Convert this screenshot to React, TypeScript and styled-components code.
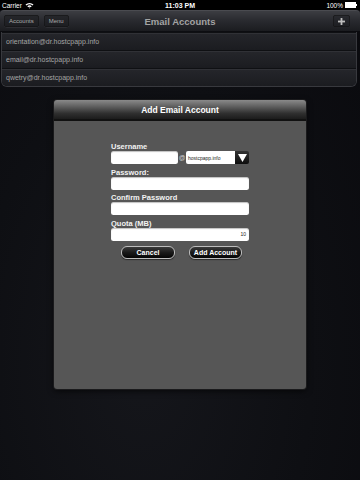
import * as React from "react";
import styled, { createGlobalStyle } from "styled-components";

const GlobalStyle = createGlobalStyle`
  html, body {
    margin: 0;
    padding: 0;
    background: #0c0d11;
  }
  body {
    font-family: "Liberation Sans", Arial, sans-serif;
  }
`;

const accounts = [
  "orientation@dr.hostcpapp.info",
  "email@dr.hostcpapp.info",
  "qwetry@dr.hostcpapp.info",
];

function App() {
  return (
    <Screen>
      <GlobalStyle />
      <StatusBar>
        <div className="left">
          <span>Carrier</span>
          <svg width="9" height="7" viewBox="0 0 9 7">
            <path d="M0.5 2.5 A6 6 0 0 1 8.5 2.5 L7.5 3.5 A4.5 4.5 0 0 0 1.5 3.5 Z" fill="#fff" />
            <path d="M2.3 4.2 A3.6 3.6 0 0 1 6.7 4.2 L5.7 5.2 A2.2 2.2 0 0 0 3.3 5.2 Z" fill="#fff" />
            <path d="M3.9 5.9 L4.5 5.3 L5.1 5.9 L4.5 6.6 Z" fill="#fff" />
          </svg>
        </div>
        <div className="time">11:03 PM</div>
        <div className="right">
          <span>100%</span>
          <Battery>
            <div className="cell" />
            <div className="tip" />
          </Battery>
        </div>
      </StatusBar>

      <NavBar>
        <NavButton>Accounts</NavButton>
        <NavButton>Menu</NavButton>
        <NavTitle>Email Accounts</NavTitle>
        <PlusButton>
          <svg width="7" height="7" viewBox="0 0 7 7">
            <rect x="2.6" y="0" width="1.8" height="7" fill="#bdbdbd" />
            <rect x="0" y="2.6" width="7" height="1.8" fill="#bdbdbd" />
          </svg>
        </PlusButton>
      </NavBar>

      <AccountList>
        {accounts.map((a) => (
          <AccountRow key={a}>{a}</AccountRow>
        ))}
      </AccountList>

      <Modal>
        <ModalHeader>Add Email Account</ModalHeader>
        <ModalBody>
          <Form>
            <Label>Username</Label>
            <UserRow>
              <Input width={67} />
              <At>@</At>
              <Select>
                <span>hostcpapp.info</span>
              </Select>
              <SelectButton>
                <svg width="9" height="8" viewBox="0 0 9 8">
                  <path d="M0 0 H9 L4.5 8 Z" fill="#fff" />
                </svg>
              </SelectButton>
            </UserRow>
            <Label>Password:</Label>
            <Input />
            <Label>Confirm Password</Label>
            <Input />
            <Label>Quota (MB)</Label>
            <Input>
              <span>10</span>
            </Input>
            <Buttons>
              <PillButton width={54}>Cancel</PillButton>
              <PillButton width={53}>Add Account</PillButton>
            </Buttons>
          </Form>
        </ModalBody>
      </Modal>
    </Screen>
  );
}

export default App;

const Screen = styled.div`
  width: 360px;
  height: 480px;
  overflow: hidden;
  display: flex;
  flex-direction: column;
  background: radial-gradient(
      ellipse at 40% 75%,
      #15161b 0%,
      #0e0f13 55%,
      #0a0a0e 100%
    );
`;

const StatusBar = styled.div`
  height: 10px;
  flex-shrink: 0;
  background: #000;
  color: #fff;
  font-size: 6.5px;
  display: flex;
  align-items: center;
  justify-content: space-between;
  padding: 0 3px 0 2px;
  position: relative;

  .left {
    display: flex;
    align-items: center;
    gap: 3px;
  }
  .time {
    position: absolute;
    left: 0;
    right: 0;
    text-align: center;
    font-weight: bold;
    font-size: 7px;
  }
  .right {
    display: flex;
    align-items: center;
    gap: 2px;
  }
`;

const Battery = styled.div`
  display: flex;
  align-items: center;
  .cell {
    width: 9px;
    height: 4px;
    background: #fff;
    border: 0.5px solid #fff;
  }
  .tip {
    width: 1px;
    height: 2px;
    background: #fff;
  }
`;

const NavBar = styled.div`
  height: 21px;
  flex-shrink: 0;
  border-radius: 4px 4px 0 0;
  background: linear-gradient(#3c3d42 0%, #2a2b30 45%, #1b1c20 100%);
  border-top: 1px solid #4a4b50;
  box-sizing: border-box;
  display: flex;
  align-items: center;
  gap: 5px;
  padding: 0 10px 0 4px;
  position: relative;
`;

const NavButton = styled.div`
  height: 12px;
  padding: 0 5px;
  border-radius: 3px;
  background: linear-gradient(#26272b, #1c1d21);
  box-shadow: inset 0 0 0 0.5px #111, 0 0.5px 0 #3a3b40;
  color: #a9a9a9;
  font-size: 6px;
  display: flex;
  align-items: center;
`;

const NavTitle = styled.div`
  position: absolute;
  left: 0;
  right: 0;
  text-align: center;
  color: #a3a3a3;
  font-weight: bold;
  font-size: 9.5px;
  pointer-events: none;
`;

const PlusButton = styled.div`
  margin-left: auto;
  width: 17px;
  height: 12px;
  border-radius: 3px;
  background: linear-gradient(#2a2b30, #1c1d21);
  box-shadow: inset 0 0 0 0.5px #111;
  display: flex;
  align-items: center;
  justify-content: center;
`;

const AccountList = styled.div`
  margin: 1px 3px 0 1px;
  border: 1px solid #38393e;
  border-top: none;
  border-radius: 0 0 6px 6px;
  overflow: hidden;
  display: flex;
  flex-direction: column;
  flex-shrink: 0;
`;

const AccountRow = styled.div`
  height: 17px;
  padding-left: 4px;
  display: flex;
  align-items: center;
  font-size: 7px;
  color: #a5a5a5;
  background: linear-gradient(#25262b, #1b1c20);
  border-top: 1px solid #0f1013;
  box-shadow: inset 0 1px 0 #303136;
`;

const Modal = styled.div`
  margin: 13px 0 0 54px;
  width: 252px;
  height: 289px;
  flex-shrink: 0;
  border-radius: 3px;
  overflow: hidden;
  display: flex;
  flex-direction: column;
  box-shadow: 0 0 0 1px #1a1a1c, 0 2px 6px rgba(0, 0, 0, 0.7);
`;

const ModalHeader = styled.div`
  height: 19px;
  flex-shrink: 0;
  background: linear-gradient(#8a8a8a 0%, #5e5e5e 35%, #303030 70%, #1c1c1c 100%);
  border-bottom: 2px solid #111;
  color: #fff;
  font-weight: bold;
  font-size: 8.5px;
  display: flex;
  align-items: center;
  justify-content: center;
`;

const ModalBody = styled.div`
  flex: 1;
  background: #565656;
  display: flex;
  justify-content: center;
  padding-top: 21px;
`;

const Form = styled.div`
  width: 138px;
  display: flex;
  flex-direction: column;
`;

const Label = styled.div`
  height: 9px;
  line-height: 9px;
  font-size: 7.5px;
  font-weight: bold;
  color: #f2f2f2;
`;

const Input = styled.div<{ width?: number }>`
  height: 13px;
  width: ${({ width }) => (width ? `${width}px` : "100%")};
  box-sizing: border-box;
  background: #fff;
  border-radius: 2.5px;
  box-shadow: inset 0 1px 1px rgba(0, 0, 0, 0.25);
  margin-bottom: 3.5px;
  display: flex;
  align-items: center;
  justify-content: flex-end;
  padding-right: 3px;
  font-size: 5px;
  color: #222;
  flex-shrink: 0;
`;

const UserRow = styled.div`
  display: flex;
  align-items: flex-start;
`;

const At = styled.div`
  width: 8px;
  height: 13px;
  display: flex;
  align-items: center;
  justify-content: center;
  font-size: 6.5px;
  color: #d6d6d6;
`;

const Select = styled.div`
  width: 49px;
  height: 13px;
  box-sizing: border-box;
  background: #fff;
  border-radius: 2px 0 0 2px;
  display: flex;
  align-items: center;
  padding-left: 2px;
  font-size: 5px;
  color: #222;
`;

const SelectButton = styled.div`
  width: 14px;
  height: 13px;
  border-radius: 0 2px 2px 0;
  background: linear-gradient(#333, #0d0d0d);
  display: flex;
  align-items: center;
  justify-content: center;
`;

const Buttons = styled.div`
  display: flex;
  justify-content: space-between;
  padding: 1.5px 7px 0 10px;
`;

const PillButton = styled.div<{ width: number }>`
  height: 13px;
  width: ${({ width }) => width}px;
  box-sizing: border-box;
  border-radius: 6px;
  background: linear-gradient(#3a3a3a 0%, #1a1a1a 50%, #050505 100%);
  border: 1px solid #bdbdbd;
  box-shadow: 0 1px 1px rgba(0, 0, 0, 0.5);
  color: #fff;
  font-size: 7px;
  font-weight: bold;
  white-space: nowrap;
  display: flex;
  align-items: center;
  justify-content: center;
`;
